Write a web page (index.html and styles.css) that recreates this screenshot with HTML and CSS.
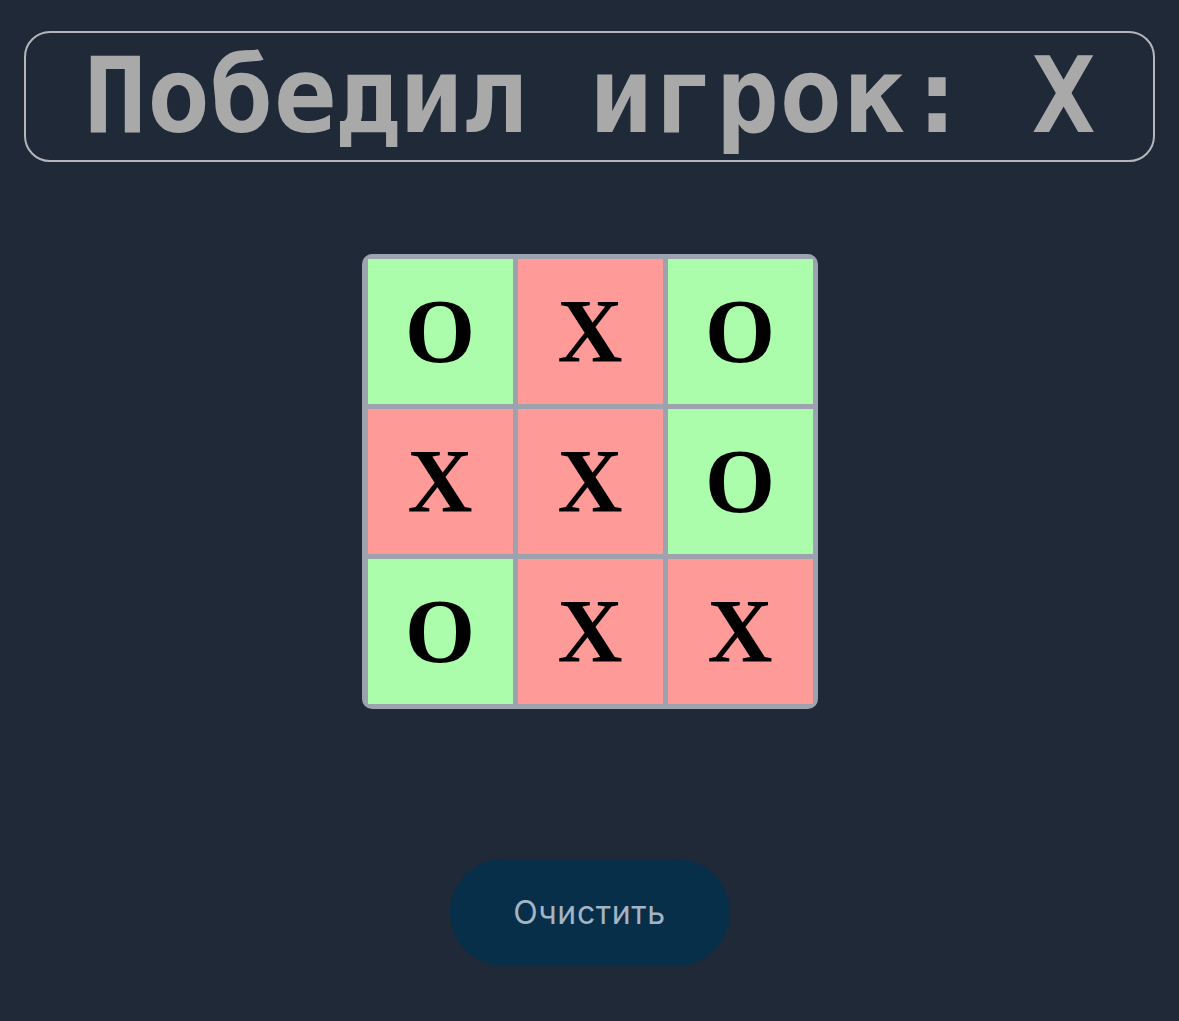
FILE: index.html
```html
<!DOCTYPE html>
<html lang="ru">
<head>
<meta charset="utf-8">
<link rel="stylesheet" href="styles.css">
</head>
<body>
<main class="app">
  <h1 class="status">Победил игрок: X</h1>
  <div class="board">
    <div class="cell o">O</div>
    <div class="cell x">X</div>
    <div class="cell o">O</div>
    <div class="cell x">X</div>
    <div class="cell x">X</div>
    <div class="cell o">O</div>
    <div class="cell o">O</div>
    <div class="cell x">X</div>
    <div class="cell x">X</div>
  </div>
  <button class="reset">Очистить</button>
</main>
</body>
</html>
```

FILE: styles.css
```css
html, body {
  margin: 0;
  padding: 0;
  background: #1f2937;
  height: 100%;
}
.app {
  display: flex;
  flex-direction: column;
  align-items: center;
  padding: 31px 24px 0;
}
.status {
  box-sizing: border-box;
  width: 100%;
  height: 131px;
  margin: 0;
  border: 2px solid #b4b6bc;
  border-radius: 26px;
  display: flex;
  align-items: center;
  justify-content: center;
  font-family: "DejaVu Sans Mono", monospace;
  font-weight: bold;
  font-size: 105px;
  line-height: 1;
  color: #a9a9a9;
  white-space: pre;
}
.board {
  margin-top: 92px;
  display: grid;
  grid-template-columns: repeat(3, 145px);
  grid-template-rows: repeat(3, 145px);
  gap: 5px;
  padding: 5px;
  padding-left: 6px;
  background: #9ca3af;
  border-radius: 10px;
}
.cell {
  display: flex;
  align-items: center;
  justify-content: center;
  font-family: "Liberation Serif", serif;
  font-weight: bold;
  font-size: 90px;
  color: #000;
  line-height: 1;
}
.cell.o { background: #abfdab; }
.cell.x { background: #fe9a98; }
.reset {
  margin-top: 150px;
  width: 280px;
  height: 107px;
  border: none;
  border-radius: 54px;
  background: #082f49;
  color: #a3b4c4;
  font-family: "Inter", sans-serif;
  font-size: 32px;
  letter-spacing: 0.6px;
  cursor: pointer;
}
```
